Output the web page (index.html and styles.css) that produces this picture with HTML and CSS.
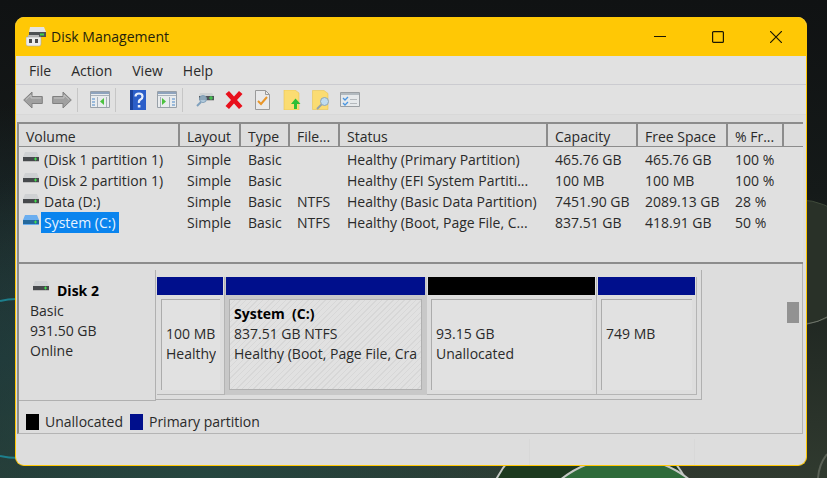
FILE: index.html
```html
<!DOCTYPE html>
<html lang="en">
<head>
<meta charset="utf-8">
<meta name="viewport" content="width=device-width, initial-scale=1">
<title>Disk Management</title>
<link rel="stylesheet" href="styles.css">
</head>
<body>

<svg class="wallpaper" viewBox="0 0 827 478" preserveAspectRatio="none" aria-hidden="true">
  <circle cx="800" cy="262" r="62" fill="#293128" stroke="#3f4a3a"/>
  <path d="M807 324q12-2 20-7" fill="none" stroke="#6f746c"/>
  <path d="M818 478q1-14 9-24" fill="none" stroke="#5a6156" stroke-width="2"/>
  <path d="M0 301q8-2 16-2M0 456q8 2 20 2" fill="none" stroke="#1d7f8c" stroke-width="2"/>
  <circle cx="591" cy="529" r="107" fill="#1d3a1f" stroke="#c4c8c4" stroke-width="2"/>
  <circle cx="625" cy="560" r="103" fill="#2e6b3a" stroke="#c4c8c4" stroke-width="2"/>
</svg>

<!-- shared drive icon -->
<svg class="defs" aria-hidden="true">
  <symbol id="drive" viewBox="0 0 16 11">
    <path class="drive-top" d="M2 0h12l2 5H0z"/>
    <path class="drive-front" d="M0 5h16v4H0z"/>
    <path d="M11 7h3M12.500 5.500v3" stroke="#3fe04c"/>
    <path class="drive-base" d="M0 9h16v1H0z"/>
  </symbol>
</svg>

<main class="window">
  <header class="titlebar">
    <svg class="app-icon" width="20" height="20" viewBox="0 0 20 20">
      <path d="M4 0h14l2 5H3z" fill="#e3e3e3"/>
      <path d="M3 5h17v5H3z" fill="#4c4f52"/>
      <path d="M14 7.500h4" stroke="#3fd24a" stroke-width="2"/>
      <path d="M2 8h11v3H2z" fill="#b8b8b8"/>
      <path d="M0 10h15v7q0 2-2 2H2q-2 0-2-2z" fill="#ededed" stroke="#a9a9a9" stroke-width=".6"/>
      <path d="M3 12h3v4H3zM9 12h3v4H9z" fill="#4b4b4b"/>
    </svg>
    <h1>Disk Management</h1>
    <div class="window-buttons">
      <button type="button" aria-label="Minimize"><svg width="12" height="12" viewBox="0 0 12 12"><path d="M0 5.500h12"/></svg></button>
      <button type="button" aria-label="Maximize"><svg width="12" height="12" viewBox="0 0 12 12"><rect x=".6" y=".6" width="10.800" height="10.800" rx="1"/></svg></button>
      <button type="button" aria-label="Close"><svg width="12" height="12" viewBox="0 0 12 12"><path d="M0 0l12 12M12 0L0 12"/></svg></button>
    </div>
  </header>

  <nav class="menu">
    <button type="button">File</button>
    <button type="button">Action</button>
    <button type="button">View</button>
    <button type="button">Help</button>
  </nav>

  <div class="toolbar">
    <button type="button" aria-label="Back">
      <svg width="20" height="18" viewBox="0 0 20 18"><path d="M.7 9L9 1v4.500h10.300v7H9V17z" fill="#a0a0a0" stroke="#808080"/><path d="M3 8.500L8 4v3h10" fill="none" stroke="#c4c4c4"/></svg>
    </button>
    <button type="button" aria-label="Forward">
      <svg width="20" height="18" viewBox="0 0 20 18"><path d="M19.300 9L11 1v4.500H.7v7H11V17z" fill="#a0a0a0" stroke="#808080"/><path d="M17 8.500L12 4v3H2" fill="none" stroke="#c4c4c4"/></svg>
    </button>
    <span class="sep"></span>
    <button type="button" aria-label="Show console tree">
      <svg width="20" height="17" viewBox="0 0 20 17"><path d="M.5.500h19v16H.5z" fill="#e9ecee" stroke="#98a0a8"/><path d="M1 1h18v2H1z" fill="#8ea3bd"/><path d="M1 4.500h18" stroke="#a8b2bc"/><path d="M2 8h3M2 11h3M2 14h3" stroke="#4b87c8"/><path d="M7.500 6v10M16.500 6v10" stroke="#a6b0ba"/><path d="M14 7v7l-4-3.500z" fill="#4cc23f"/></svg>
    </button>
    <span class="sep"></span>
    <button type="button" aria-label="Help">
      <svg width="16" height="20" viewBox="0 0 16 20"><path d="M0 0h16v20H0z" fill="#2c5fc9"/><path d="M0 0h3v20H0z" fill="#1c439c"/><path d="M5.500 6.500q0-3 3.500-3t3.500 3q0 2-2 3T9 13" fill="none" stroke="#e6eefc" stroke-width="2.200"/><path d="M7.800 15h2.600v2.500H7.800z" fill="#e6eefc"/></svg>
    </button>
    <button type="button" aria-label="Show action pane">
      <svg width="20" height="17" viewBox="0 0 20 17"><path d="M.5.500h19v16H.5z" fill="#e9ecee" stroke="#98a0a8"/><path d="M1 1h18v2H1z" fill="#8ea3bd"/><path d="M1 4.500h18" stroke="#a8b2bc"/><path d="M15 8h3M15 11h3M15 14h3" stroke="#4b87c8"/><path d="M3.500 6v10M12.500 6v10" stroke="#a6b0ba"/><path d="M5 7v7l4-3.500z" fill="#4cc23f"/></svg>
    </button>
    <span class="sep"></span>
    <button type="button" aria-label="Rescan disks">
      <svg width="18" height="17" viewBox="0 0 18 17"><path d="M4 2h12l2 3H3z" fill="#cfd2d4"/><path d="M3 5h15v4H3z" fill="#505458"/><path d="M13 7h4M15 5v4" stroke="#3fe04c"/><path d="M4 9h14v1H4z" fill="#bbb"/><path d="M1 15l4-4" stroke="#7fa0bd" stroke-width="2"/><circle cx="7" cy="8" r="3.500" fill="#a8cbe4" fill-opacity=".7" stroke="#7f9db5"/></svg>
    </button>
    <button type="button" aria-label="Delete volume">
      <svg width="18" height="18" viewBox="0 0 18 18"><path d="M4 0l5 5.500L14 0l3.500 3L12 9l5.500 6-3.500 3-5-5.500L4 18 .5 15 6 9 .5 3z" fill="#e8101c"/></svg>
    </button>
    <button type="button" aria-label="Properties">
      <svg width="15" height="20" viewBox="0 0 15 20"><path d="M.5.500h10l4 4v15H.5z" fill="#e9e9ea" stroke="#9a9a9a"/><path d="M10.500.500v4h4" fill="none" stroke="#9a9a9a"/><path d="M3 11l3 3 6-7" fill="none" stroke="#e8962a" stroke-width="2"/></svg>
    </button>
    <button type="button" aria-label="Up one level">
      <svg width="18" height="20" viewBox="0 0 18 20"><path d="M1 0h11l4 3v17H1z" fill="#fbdc72" stroke="#e9c550" stroke-width=".6"/><path d="M12.500 8.500l5 5.500H14v5h-3v-5H8z" fill="#2fbf35"/></svg>
    </button>
    <button type="button" aria-label="Find">
      <svg width="18" height="20" viewBox="0 0 18 20"><path d="M.5.500H12l4 3v16H.5z" fill="#fbdc72" stroke="#e9c550" stroke-width=".6"/><path d="M5 19l5-5" stroke="#95a2ad" stroke-width="2"/><circle cx="12.500" cy="11.500" r="4" fill="#bfdcf0" stroke="#8fa5b5"/></svg>
    </button>
    <button type="button" aria-label="Options list">
      <svg width="20" height="15" viewBox="0 0 20 15"><path d="M.5.500h19v14H.5z" fill="#e6e9eb" stroke="#9a9fa3"/><path d="M1 1h18v2H1z" fill="#b2bac0"/><path d="M3 6l2 2 3-3M3 11l2 2 3-3" fill="none" stroke="#4a95e0" stroke-width="1.300"/><path d="M10 7.500h7M10 11.500h7" stroke="#b4b9bd"/></svg>
    </button>
  </div>

  <section class="volumes">
    <table>
      <colgroup>
        <col class="c-volume"><col class="c-layout"><col class="c-type"><col class="c-fs"><col class="c-status">
        <col class="c-size"><col class="c-size"><col class="c-pct"><col>
      </colgroup>
      <thead>
        <tr><th>Volume</th><th>Layout</th><th>Type</th><th>File...</th><th>Status</th><th>Capacity</th><th>Free Space</th><th>% Fr...</th><th></th></tr>
      </thead>
      <tbody>
        <tr><td class="vol"><svg class="drive"><use href="#drive"/></svg><span>(Disk 1 partition 1)</span></td><td>Simple</td><td>Basic</td><td></td><td>Healthy (Primary Partition)</td><td>465.76 GB</td><td>465.76 GB</td><td>100 %</td><td></td></tr>
        <tr><td class="vol"><svg class="drive"><use href="#drive"/></svg><span>(Disk 2 partition 1)</span></td><td>Simple</td><td>Basic</td><td></td><td>Healthy (EFI System Partiti...</td><td>100 MB</td><td>100 MB</td><td>100 %</td><td></td></tr>
        <tr><td class="vol"><svg class="drive"><use href="#drive"/></svg><span>Data (D:)</span></td><td>Simple</td><td>Basic</td><td>NTFS</td><td>Healthy (Basic Data Partition)</td><td>7451.90 GB</td><td>2089.13 GB</td><td>28 %</td><td></td></tr>
        <tr class="selected"><td class="vol"><svg class="drive"><use href="#drive"/></svg><span>System (C:)</span></td><td>Simple</td><td>Basic</td><td>NTFS</td><td>Healthy (Boot, Page File, C...</td><td>837.51 GB</td><td>418.91 GB</td><td>50 %</td><td></td></tr>
      </tbody>
    </table>
  </section>

  <section class="graph">
    <div class="disk-row">
      <div class="disk-info">
        <h2><svg class="drive"><use href="#drive"/></svg>Disk 2</h2>
        <p>Basic</p>
        <p>931.50 GB</p>
        <p>Online</p>
      </div>
      <div class="partitions">
        <div class="part">
          <div class="strip"></div>
          <div class="box"><p class="name"></p><p>100 MB</p><p>Healthy</p></div>
        </div>
        <div class="part active">
          <div class="strip"></div>
          <div class="box"><p class="name">System&nbsp; (C:)</p><p>837.51 GB NTFS</p><p>Healthy (Boot, Page File, Cra</p></div>
        </div>
        <div class="part free">
          <div class="strip"></div>
          <div class="box"><p class="name"></p><p>93.15 GB</p><p>Unallocated</p></div>
        </div>
        <div class="part">
          <div class="strip"></div>
          <div class="box"><p class="name"></p><p>749 MB</p></div>
        </div>
      </div>
      <div class="scrollbar"><div class="thumb"></div></div>
    </div>
    <div class="legend">
      <span class="swatch black"></span><span>Unallocated</span>
      <span class="swatch blue"></span><span>Primary partition</span>
    </div>
  </section>

  <footer class="statusbar"><span></span><span></span></footer>
</main>

</body>
</html>
```
FILE: styles.css
```css
* {
  box-sizing: border-box;
}

body {
  margin: 0;
  padding: 17px 20px 12px 15px;
  min-height: 100vh;
  font-family: "Open Sans", "Noto Sans", sans-serif;
  font-size: 14px;
  line-height: 20px;
  color: #2a2a2a;
  background: radial-gradient(ellipse at 25% 100%, #26463f, transparent 50%),
    radial-gradient(ellipse at 0 75%, #1d3338, transparent 50%),
    linear-gradient(#101213, #151a19 40%, #303a2f);
}

h1, h2, p {
  margin: 0;
  font-size: 14px;
  line-height: 20px;
}

button {
  border: 0;
  padding: 0;
  background: none;
  font: inherit;
  color: inherit;
}

.wallpaper {
  position: absolute;
  top: 0;
  left: 0;
  width: 100%;
  height: 100%;
}

.defs {
  position: absolute;
  width: 0;
  height: 0;
}

.window {
  position: relative;
  border: 1px solid #ffc805;
  border-top: 0;
  border-radius: 9px;
  background: #ddd;
  overflow: hidden;
}

/* title bar */
.titlebar {
  display: flex;
  align-items: center;
  height: 39px;
  padding: 0 1px 0 10px;
  background: #ffc805;
  color: #241f0c;
}

.titlebar h1 {
  flex: 1;
  margin-left: 5px;
  font-weight: 400;
}

.window-buttons {
  display: flex;
}

.window-buttons button {
  display: grid;
  place-items: center;
  width: 58px;
  height: 39px;
}

.window-buttons svg {
  fill: none;
  stroke: #1c1804;
  stroke-width: 1.2;
}

/* menu and toolbar */
.menu {
  display: flex;
  gap: 20px;
  height: 29px;
  padding: 2px 13px 0;
  background: #e1e1e1;
  border-bottom: 1px solid #cbcbd0;
}

.toolbar {
  display: flex;
  align-items: center;
  height: 30px;
  padding-left: 2px;
  background: #e1e1e1;
  border-bottom: 1px solid #d8d8d8;
}

.toolbar button {
  display: grid;
  place-items: center;
  width: 29px;
  height: 28px;
}

.sep {
  width: 1px;
  height: 24px;
  margin: 0 7px 0 1px;
  background: #c6c6c6;
}

.drive {
  flex: none;
  width: 16px;
  height: 11px;
  --top: #cfd1d3;
  --front: #46494c;
  --base: #bcbcbc;
}

.drive-top {
  fill: var(--top);
}

.drive-front {
  fill: var(--front);
}

.drive-base {
  fill: var(--base);
}

/* volume list */
.volumes {
  height: 142px;
  margin: 7px 3px 0 1px;
  border: solid #8c8c8c;
  border-width: 2px 0 2px 2px;
  background: #e0e0e0;
}

table {
  width: 100%;
  table-layout: fixed;
  border-collapse: separate;
  border-spacing: 0;
}

.c-volume {
  width: 161px;
}

.c-layout {
  width: 61px;
}

.c-type {
  width: 49px;
}

.c-fs {
  width: 50px;
}

.c-status {
  width: 208px;
}

.c-size {
  width: 90px;
}

.c-pct {
  width: 56px;
}

th, td {
  padding: 0 0 0 7px;
  text-align: left;
  white-space: nowrap;
  overflow: hidden;
}

th {
  height: 23px;
  padding-top: 3px;
  font-weight: 400;
  border-right: 2px solid #8c8c8c;
  border-bottom: 1px solid #8c8c8c;
  background: #ddd;
  line-height: 19px;
}

th:last-child {
  border-right: 0;
}

tbody::before {
  content: "";
  display: block;
  height: 2px;
}

td {
  height: 21px;
  line-height: 21px;
}

.vol {
  display: flex;
  padding-left: 4px;
}

.vol .drive {
  margin: 3px 2px 0 0;
}

.vol span {
  padding: 0 3px;
}

.selected .vol span {
  background: #0a84ee;
  color: #e8f3ff;
}

.selected .drive {
  --top: #6aaef0;
  --front: #24689c;
  --base: #6aaef0;
}

/* graphical view */
.graph {
  margin: 0 3px 0 1px;
  border: solid #b4b4b4;
  border-width: 0 1px 1px 2px;
  border-left-color: #8c8c8c;
}

.disk-row {
  display: flex;
  padding-top: 6px;
}

.disk-info {
  width: 137px;
  height: 131px;
  padding: 11px 11px 0;
  border: solid #b0b0b0;
  border-width: 0 1px 1px 0;
}

.disk-info h2 {
  display: flex;
  gap: 8px;
  padding-left: 3px;
  color: #000;
}

.partitions {
  display: grid;
  flex: 0 1 546px;
  grid-template-columns: 68fr 202fr 170fr 100fr;
  height: 130px;
  padding: 7px 4px 4px 1px;
  border: solid #b0b0b0;
  border-width: 0 1px 1px 0;
}

.part {
  min-width: 0;
  border: solid #b4b4b4;
  border-width: 0 1px 1px 0;
}

.strip {
  height: 18px;
  margin: 0 1px 0 0;
  background: #000f8c;
}

.free .strip {
  background: #000;
}

.part + .part .strip {
  margin-left: 1px;
}

.box {
  height: 91px;
  margin: 4px 4px 0 4px;
  padding: 4px 4px 0 4px;
  border: solid #acacac;
  border-width: 1px 0 0 1px;
  background: #e1e1e1;
}

.box p {
  overflow: hidden;
  white-space: nowrap;
}

.box .name {
  min-height: 20px;
  font-weight: 700;
  color: #000;
}

.active {
  background: #c8c8c8;
  border-color: #c8c8c8;
}

.active .box {
  padding: 4px 3px 0 4px;
  border: 1px solid #b0b0b0;
  background: repeating-linear-gradient(135deg, #e1e1e1 0 3px, #d7d7d7 3px 4px);
}

.scrollbar {
  margin-left: auto;
  padding: 32px 3px 0 0;
}

.thumb {
  width: 12px;
  height: 21px;
  background: #929292;
}

.legend {
  display: flex;
  align-items: center;
  height: 32px;
  padding: 9px 0 0 7px;
}

.swatch {
  width: 13px;
  height: 16px;
  margin-right: 6px;
}

.black {
  background: #000;
}

.blue {
  margin-left: 7px;
  background: #000f8c;
}

.statusbar {
  display: flex;
  height: 31px;
}

.statusbar span {
  width: 65%;
  margin-top: 5px;
  border-right: 1px solid #d8d8d8;
}

.statusbar span + span {
  width: 21%;
}
```
